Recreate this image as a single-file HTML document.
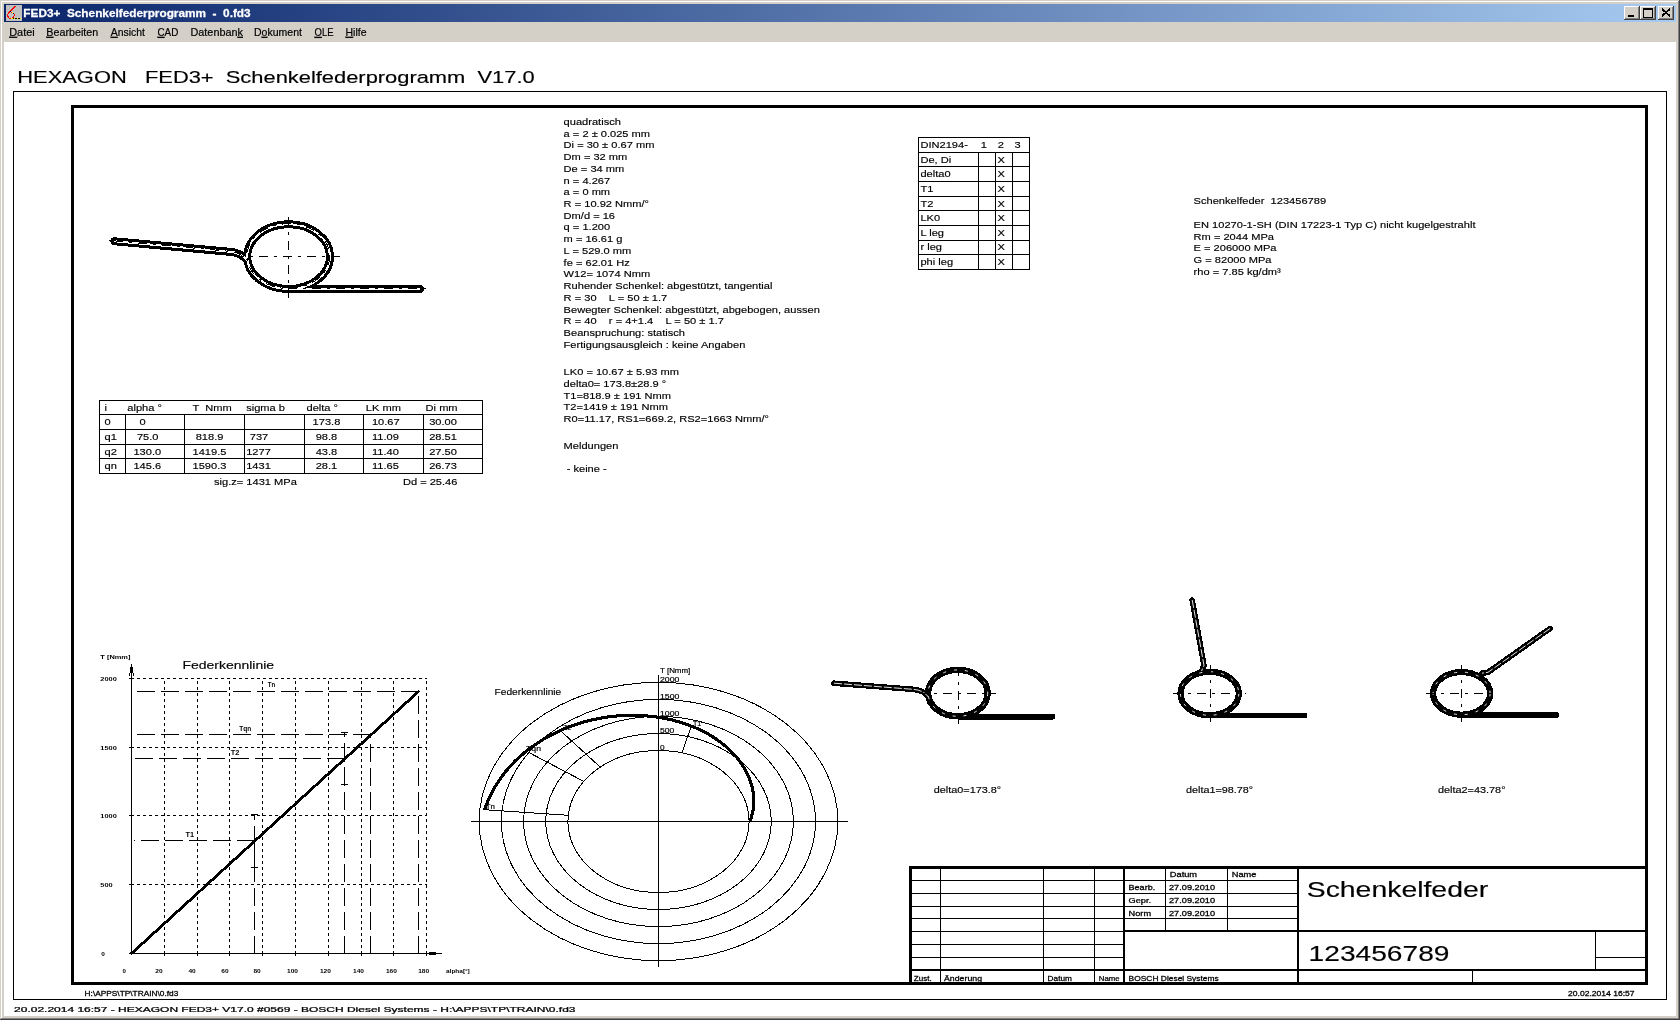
<!DOCTYPE html>
<html><head><meta charset="utf-8"><title>FED3+ Schenkelfederprogramm - 0.fd3</title>
<style>
html,body{margin:0;padding:0;background:#d4d0c8;overflow:hidden}
svg{display:block;will-change:transform}
text{font-family:"Liberation Sans",sans-serif;white-space:pre}
</style></head><body>
<svg width="1680" height="1020" viewBox="0 0 1680 1020" shape-rendering="crispEdges">
<rect x="0" y="0" width="1680" height="1020" fill="#d4d0c8"/>
<rect x="1.00" y="1.00" width="1678.00" height="1.00" fill="#fff" shape-rendering="crispEdges"/>
<rect x="1.00" y="1.00" width="1.00" height="1018.00" fill="#fff" shape-rendering="crispEdges"/>
<rect x="0.00" y="1019.00" width="1680.00" height="1.00" fill="#404040" shape-rendering="crispEdges"/>
<rect x="1679.00" y="0.00" width="1.00" height="1020.00" fill="#404040" shape-rendering="crispEdges"/>
<rect x="1.00" y="1018.00" width="1678.00" height="1.00" fill="#808080" shape-rendering="crispEdges"/>
<rect x="1678.00" y="1.00" width="1.00" height="1018.00" fill="#808080" shape-rendering="crispEdges"/>
<defs><linearGradient id="tg" x1="0" x2="1" y1="0" y2="0"><stop offset="0" stop-color="#0a246a"/><stop offset="1" stop-color="#a6caf0"/></linearGradient></defs>
<rect x="4.00" y="4.00" width="1672.00" height="18.00" fill="url(#tg)" shape-rendering="crispEdges"/>
<rect x="6.00" y="5.00" width="16.00" height="16.00" fill="#c0c0c0" shape-rendering="crispEdges"/>
<path fill="#f00" shape-rendering="crispEdges" d="M14,6h1v1h-1zM15,6h1v1h-1zM13,7h1v1h-1zM14,7h1v1h-1zM12,8h1v1h-1zM13,8h1v1h-1zM11,9h1v1h-1zM12,9h1v1h-1zM10,10h1v1h-1zM11,10h1v1h-1zM9,11h1v1h-1zM8,12h1v1h-1zM9,12h1v1h-1zM11,12h1v1h-1zM8,13h1v1h-1zM7,14h1v1h-1zM14,14h1v1h-1zM7,15h1v1h-1zM14,15h1v1h-1zM7,16h1v1h-1zM8,16h1v1h-1zM13,16h1v1h-1zM8,17h1v1h-1zM12,17h1v1h-1zM13,17h1v1h-1zM9,18h1v1h-1zM10,18h1v1h-1z"/>
<path fill="#000" shape-rendering="crispEdges" d="M10,11h1v1h-1zM13,13h1v1h-1zM13,18h1v1h-1zM15,18h1v1h-1zM16,18h1v1h-1zM18,18h1v1h-1zM19,18h1v1h-1z"/>
<path fill="#ff0" shape-rendering="crispEdges" d="M12,12h1v1h-1zM11,18h1v1h-1zM12,18h1v1h-1zM14,18h1v1h-1zM17,18h1v1h-1zM20,18h1v1h-1z"/>
<text transform="translate(23.30,16.70) scale(1.0740,1)" font-size="11.00" xml:space="preserve" font-weight="bold" fill="#fff" stroke="#fff" stroke-width="0.25">FED3+  Schenkelfederprogramm  -  0.fd3</text>
<rect x="1624.00" y="6.00" width="16.00" height="14.00" fill="#d4d0c8" shape-rendering="crispEdges"/>
<rect x="1624.00" y="6.00" width="15.00" height="1.00" fill="#fff" shape-rendering="crispEdges"/>
<rect x="1624.00" y="6.00" width="1.00" height="13.00" fill="#fff" shape-rendering="crispEdges"/>
<rect x="1624.00" y="19.00" width="16.00" height="1.00" fill="#404040" shape-rendering="crispEdges"/>
<rect x="1639.00" y="6.00" width="1.00" height="14.00" fill="#404040" shape-rendering="crispEdges"/>
<rect x="1625.00" y="18.00" width="14.00" height="1.00" fill="#808080" shape-rendering="crispEdges"/>
<rect x="1638.00" y="7.00" width="1.00" height="12.00" fill="#808080" shape-rendering="crispEdges"/>
<rect x="1640.00" y="6.00" width="16.00" height="14.00" fill="#d4d0c8" shape-rendering="crispEdges"/>
<rect x="1640.00" y="6.00" width="15.00" height="1.00" fill="#fff" shape-rendering="crispEdges"/>
<rect x="1640.00" y="6.00" width="1.00" height="13.00" fill="#fff" shape-rendering="crispEdges"/>
<rect x="1640.00" y="19.00" width="16.00" height="1.00" fill="#404040" shape-rendering="crispEdges"/>
<rect x="1655.00" y="6.00" width="1.00" height="14.00" fill="#404040" shape-rendering="crispEdges"/>
<rect x="1641.00" y="18.00" width="14.00" height="1.00" fill="#808080" shape-rendering="crispEdges"/>
<rect x="1654.00" y="7.00" width="1.00" height="12.00" fill="#808080" shape-rendering="crispEdges"/>
<rect x="1658.00" y="6.00" width="16.00" height="14.00" fill="#d4d0c8" shape-rendering="crispEdges"/>
<rect x="1658.00" y="6.00" width="15.00" height="1.00" fill="#fff" shape-rendering="crispEdges"/>
<rect x="1658.00" y="6.00" width="1.00" height="13.00" fill="#fff" shape-rendering="crispEdges"/>
<rect x="1658.00" y="19.00" width="16.00" height="1.00" fill="#404040" shape-rendering="crispEdges"/>
<rect x="1673.00" y="6.00" width="1.00" height="14.00" fill="#404040" shape-rendering="crispEdges"/>
<rect x="1659.00" y="18.00" width="14.00" height="1.00" fill="#808080" shape-rendering="crispEdges"/>
<rect x="1672.00" y="7.00" width="1.00" height="12.00" fill="#808080" shape-rendering="crispEdges"/>
<rect x="1628.00" y="15.00" width="6.00" height="2.00" fill="#000" shape-rendering="crispEdges"/>
<rect x="1643.00" y="8.00" width="9.00" height="9.00" fill="none" stroke="#000" stroke-width="1.00" shape-rendering="crispEdges"/>
<rect x="1643.00" y="8.00" width="9.00" height="2.00" fill="#000" shape-rendering="crispEdges"/>
<path d="M1662,9 L1670,16 M1670,9 L1662,16" stroke="#000" stroke-width="1.8" fill="none"/>
<text transform="translate(9.20,35.8) scale(0.9930,1)" font-size="11" stroke="#000" stroke-width="0.2"><tspan text-decoration="underline">D</tspan>atei</text>
<text transform="translate(46.30,35.8) scale(0.9773,1)" font-size="11" stroke="#000" stroke-width="0.2"><tspan text-decoration="underline">B</tspan>earbeiten</text>
<text transform="translate(110.80,35.8) scale(0.9481,1)" font-size="11" stroke="#000" stroke-width="0.2"><tspan text-decoration="underline">A</tspan>nsicht</text>
<text transform="translate(157.50,35.8) scale(0.8956,1)" font-size="11" stroke="#000" stroke-width="0.2"><tspan text-decoration="underline">C</tspan>AD</text>
<text transform="translate(190.50,35.8) scale(0.9867,1)" font-size="11" stroke="#000" stroke-width="0.2">Datenban<tspan text-decoration="underline">k</tspan></text>
<text transform="translate(254.00,35.8) scale(0.9574,1)" font-size="11" stroke="#000" stroke-width="0.2">D<tspan text-decoration="underline">o</tspan>kument</text>
<text transform="translate(314.50,35.8) scale(0.8632,1)" font-size="11" stroke="#000" stroke-width="0.2"><tspan text-decoration="underline">O</tspan>LE</text>
<text transform="translate(345.50,35.8) scale(0.9543,1)" font-size="11" stroke="#000" stroke-width="0.2"><tspan text-decoration="underline">H</tspan>ilfe</text>
<rect x="4.00" y="42.00" width="1672.00" height="974.00" fill="#fff" shape-rendering="crispEdges"/>
<text transform="translate(17.30,82.70) scale(1.3689,1)" font-size="16.00" xml:space="preserve" stroke="#000" stroke-width="0.15">HEXAGON   FED3+  Schenkelfederprogramm  V17.0</text>
<rect x="13.50" y="91.50" width="1653.00" height="908.00" fill="none" stroke="#000" stroke-width="1.00" shape-rendering="crispEdges"/>
<rect x="72.50" y="106.50" width="1574.00" height="877.00" fill="none" stroke="#000" stroke-width="3.00" shape-rendering="crispEdges"/>
<text transform="translate(84.60,995.90) scale(1.2584,1)" font-size="6.60" xml:space="preserve" stroke="#000" stroke-width="0.25">H:\APPS\TP\TRAIN\0.fd3</text>
<text transform="translate(1568.10,995.50) scale(1.2981,1)" font-size="6.60" xml:space="preserve" stroke="#000" stroke-width="0.25">20.02.2014 16:57</text>
<text transform="translate(14.10,1011.90) scale(1.7154,1)" font-size="7.00" xml:space="preserve" stroke="#000" stroke-width="0.25">20.02.2014 16:57 - HEXAGON FED3+ V17.0 #0569 - BOSCH Diesel Systems - H:\APPS\TP\TRAIN\0.fd3</text>
<text transform="translate(563.60,124.90) scale(1.1560,1)" font-size="9.60" xml:space="preserve" stroke="#000" stroke-width="0.15">quadratisch</text>
<text transform="translate(563.60,136.63) scale(1.1560,1)" font-size="9.60" xml:space="preserve" stroke="#000" stroke-width="0.15">a = 2 ± 0.025 mm</text>
<text transform="translate(563.60,148.36) scale(1.1560,1)" font-size="9.60" xml:space="preserve" stroke="#000" stroke-width="0.15">Di = 30 ± 0.67 mm</text>
<text transform="translate(563.60,160.09) scale(1.1560,1)" font-size="9.60" xml:space="preserve" stroke="#000" stroke-width="0.15">Dm = 32 mm</text>
<text transform="translate(563.60,171.82) scale(1.1560,1)" font-size="9.60" xml:space="preserve" stroke="#000" stroke-width="0.15">De = 34 mm</text>
<text transform="translate(563.60,183.55) scale(1.1560,1)" font-size="9.60" xml:space="preserve" stroke="#000" stroke-width="0.15">n = 4.267</text>
<text transform="translate(563.60,195.28) scale(1.1560,1)" font-size="9.60" xml:space="preserve" stroke="#000" stroke-width="0.15">a = 0 mm</text>
<text transform="translate(563.60,207.01) scale(1.1560,1)" font-size="9.60" xml:space="preserve" stroke="#000" stroke-width="0.15">R = 10.92 Nmm/°</text>
<text transform="translate(563.60,218.74) scale(1.1560,1)" font-size="9.60" xml:space="preserve" stroke="#000" stroke-width="0.15">Dm/d = 16</text>
<text transform="translate(563.60,230.47) scale(1.1560,1)" font-size="9.60" xml:space="preserve" stroke="#000" stroke-width="0.15">q = 1.200</text>
<text transform="translate(563.60,242.20) scale(1.1560,1)" font-size="9.60" xml:space="preserve" stroke="#000" stroke-width="0.15">m = 16.61 g</text>
<text transform="translate(563.60,253.93) scale(1.1560,1)" font-size="9.60" xml:space="preserve" stroke="#000" stroke-width="0.15">L = 529.0 mm</text>
<text transform="translate(563.60,265.66) scale(1.1560,1)" font-size="9.60" xml:space="preserve" stroke="#000" stroke-width="0.15">fe = 62.01 Hz</text>
<text transform="translate(563.60,277.39) scale(1.1560,1)" font-size="9.60" xml:space="preserve" stroke="#000" stroke-width="0.15">W12= 1074 Nmm</text>
<text transform="translate(563.60,289.12) scale(1.1560,1)" font-size="9.60" xml:space="preserve" stroke="#000" stroke-width="0.15">Ruhender Schenkel: abgestützt, tangential</text>
<text transform="translate(563.60,300.85) scale(1.1560,1)" font-size="9.60" xml:space="preserve" stroke="#000" stroke-width="0.15">R = 30    L = 50 ± 1.7</text>
<text transform="translate(563.60,312.58) scale(1.1560,1)" font-size="9.60" xml:space="preserve" stroke="#000" stroke-width="0.15">Bewegter Schenkel: abgestützt, abgebogen, aussen</text>
<text transform="translate(563.60,324.31) scale(1.1560,1)" font-size="9.60" xml:space="preserve" stroke="#000" stroke-width="0.15">R = 40    r = 4+1.4    L = 50 ± 1.7</text>
<text transform="translate(563.60,336.04) scale(1.1560,1)" font-size="9.60" xml:space="preserve" stroke="#000" stroke-width="0.15">Beanspruchung: statisch</text>
<text transform="translate(563.60,347.77) scale(1.1560,1)" font-size="9.60" xml:space="preserve" stroke="#000" stroke-width="0.15">Fertigungsausgleich : keine Angaben</text>
<text transform="translate(563.60,375.10) scale(1.1560,1)" font-size="9.60" xml:space="preserve" stroke="#000" stroke-width="0.15">LK0 = 10.67 ± 5.93 mm</text>
<text transform="translate(563.60,386.90) scale(1.1560,1)" font-size="9.60" xml:space="preserve" stroke="#000" stroke-width="0.15">delta0= 173.8±28.9 °</text>
<text transform="translate(563.60,398.60) scale(1.1560,1)" font-size="9.60" xml:space="preserve" stroke="#000" stroke-width="0.15">T1=818.9 ± 191 Nmm</text>
<text transform="translate(563.60,410.40) scale(1.1560,1)" font-size="9.60" xml:space="preserve" stroke="#000" stroke-width="0.15">T2=1419 ± 191 Nmm</text>
<text transform="translate(563.60,422.10) scale(1.1560,1)" font-size="9.60" xml:space="preserve" stroke="#000" stroke-width="0.15">R0=11.17, RS1=669.2, RS2=1663 Nmm/°</text>
<text transform="translate(563.60,448.60) scale(1.1560,1)" font-size="9.60" xml:space="preserve" stroke="#000" stroke-width="0.15">Meldungen</text>
<text transform="translate(563.60,471.70) scale(1.1560,1)" font-size="9.60" xml:space="preserve" stroke="#000" stroke-width="0.15"> - keine -</text>
<text transform="translate(1193.60,203.60) scale(1.1560,1)" font-size="9.60" xml:space="preserve" stroke="#000" stroke-width="0.15">Schenkelfeder  123456789</text>
<text transform="translate(1193.60,227.60) scale(1.1560,1)" font-size="9.60" xml:space="preserve" stroke="#000" stroke-width="0.15">EN 10270-1-SH (DIN 17223-1 Typ C) nicht kugelgestrahlt</text>
<text transform="translate(1193.60,239.60) scale(1.1560,1)" font-size="9.60" xml:space="preserve" stroke="#000" stroke-width="0.15">Rm = 2044 MPa</text>
<text transform="translate(1193.60,250.90) scale(1.1560,1)" font-size="9.60" xml:space="preserve" stroke="#000" stroke-width="0.15">E = 206000 MPa</text>
<text transform="translate(1193.60,262.60) scale(1.1560,1)" font-size="9.60" xml:space="preserve" stroke="#000" stroke-width="0.15">G = 82000 MPa</text>
<text transform="translate(1193.60,274.70) scale(1.1560,1)" font-size="9.60" xml:space="preserve" stroke="#000" stroke-width="0.15">rho = 7.85 kg/dm³</text>
<rect x="918.50" y="137.50" width="111.00" height="132.00" fill="none" stroke="#000" stroke-width="1.00" shape-rendering="crispEdges"/>
<line x1="918.50" y1="152.50" x2="1029.50" y2="152.50" stroke="#000" stroke-width="1.00" shape-rendering="crispEdges"/>
<line x1="918.50" y1="166.50" x2="1029.50" y2="166.50" stroke="#000" stroke-width="1.00" shape-rendering="crispEdges"/>
<line x1="918.50" y1="181.50" x2="1029.50" y2="181.50" stroke="#000" stroke-width="1.00" shape-rendering="crispEdges"/>
<line x1="918.50" y1="196.50" x2="1029.50" y2="196.50" stroke="#000" stroke-width="1.00" shape-rendering="crispEdges"/>
<line x1="918.50" y1="210.50" x2="1029.50" y2="210.50" stroke="#000" stroke-width="1.00" shape-rendering="crispEdges"/>
<line x1="918.50" y1="225.50" x2="1029.50" y2="225.50" stroke="#000" stroke-width="1.00" shape-rendering="crispEdges"/>
<line x1="918.50" y1="240.50" x2="1029.50" y2="240.50" stroke="#000" stroke-width="1.00" shape-rendering="crispEdges"/>
<line x1="918.50" y1="254.50" x2="1029.50" y2="254.50" stroke="#000" stroke-width="1.00" shape-rendering="crispEdges"/>
<line x1="978.50" y1="152.50" x2="978.50" y2="269.50" stroke="#000" stroke-width="1.00" shape-rendering="crispEdges"/>
<line x1="995.50" y1="152.50" x2="995.50" y2="269.50" stroke="#000" stroke-width="1.00" shape-rendering="crispEdges"/>
<line x1="1012.50" y1="152.50" x2="1012.50" y2="269.50" stroke="#000" stroke-width="1.00" shape-rendering="crispEdges"/>
<text transform="translate(920.40,147.80) scale(1.1560,1)" font-size="9.60" xml:space="preserve" stroke="#000" stroke-width="0.15">DIN2194-</text>
<text transform="translate(980.80,147.80) scale(1.1560,1)" font-size="9.60" xml:space="preserve" stroke="#000" stroke-width="0.15">1</text>
<text transform="translate(997.80,147.80) scale(1.1560,1)" font-size="9.60" xml:space="preserve" stroke="#000" stroke-width="0.15">2</text>
<text transform="translate(1014.60,147.80) scale(1.1560,1)" font-size="9.60" xml:space="preserve" stroke="#000" stroke-width="0.15">3</text>
<text transform="translate(920.40,162.60) scale(1.1560,1)" font-size="9.60" xml:space="preserve" stroke="#000" stroke-width="0.15">De, Di</text>
<text transform="translate(997.50,162.60) scale(1.1560,1)" font-size="9.60" xml:space="preserve" stroke="#000" stroke-width="0.15">X</text>
<text transform="translate(920.40,176.90) scale(1.1560,1)" font-size="9.60" xml:space="preserve" stroke="#000" stroke-width="0.15">delta0</text>
<text transform="translate(997.50,176.90) scale(1.1560,1)" font-size="9.60" xml:space="preserve" stroke="#000" stroke-width="0.15">X</text>
<text transform="translate(920.40,191.70) scale(1.1560,1)" font-size="9.60" xml:space="preserve" stroke="#000" stroke-width="0.15">T1</text>
<text transform="translate(997.50,191.70) scale(1.1560,1)" font-size="9.60" xml:space="preserve" stroke="#000" stroke-width="0.15">X</text>
<text transform="translate(920.40,206.50) scale(1.1560,1)" font-size="9.60" xml:space="preserve" stroke="#000" stroke-width="0.15">T2</text>
<text transform="translate(997.50,206.50) scale(1.1560,1)" font-size="9.60" xml:space="preserve" stroke="#000" stroke-width="0.15">X</text>
<text transform="translate(920.40,220.80) scale(1.1560,1)" font-size="9.60" xml:space="preserve" stroke="#000" stroke-width="0.15">LK0</text>
<text transform="translate(997.50,220.80) scale(1.1560,1)" font-size="9.60" xml:space="preserve" stroke="#000" stroke-width="0.15">X</text>
<text transform="translate(920.40,235.60) scale(1.1560,1)" font-size="9.60" xml:space="preserve" stroke="#000" stroke-width="0.15">L leg</text>
<text transform="translate(997.50,235.60) scale(1.1560,1)" font-size="9.60" xml:space="preserve" stroke="#000" stroke-width="0.15">X</text>
<text transform="translate(920.40,250.40) scale(1.1560,1)" font-size="9.60" xml:space="preserve" stroke="#000" stroke-width="0.15">r leg</text>
<text transform="translate(997.50,250.40) scale(1.1560,1)" font-size="9.60" xml:space="preserve" stroke="#000" stroke-width="0.15">X</text>
<text transform="translate(920.40,264.70) scale(1.1560,1)" font-size="9.60" xml:space="preserve" stroke="#000" stroke-width="0.15">phi leg</text>
<text transform="translate(997.50,264.70) scale(1.1560,1)" font-size="9.60" xml:space="preserve" stroke="#000" stroke-width="0.15">X</text>
<rect x="99.50" y="400.50" width="383.00" height="73.00" fill="none" stroke="#000" stroke-width="1.00" shape-rendering="crispEdges"/>
<line x1="99.50" y1="414.50" x2="482.50" y2="414.50" stroke="#000" stroke-width="1.00" shape-rendering="crispEdges"/>
<line x1="99.50" y1="429.50" x2="482.50" y2="429.50" stroke="#000" stroke-width="1.00" shape-rendering="crispEdges"/>
<line x1="99.50" y1="444.50" x2="482.50" y2="444.50" stroke="#000" stroke-width="1.00" shape-rendering="crispEdges"/>
<line x1="99.50" y1="458.50" x2="482.50" y2="458.50" stroke="#000" stroke-width="1.00" shape-rendering="crispEdges"/>
<line x1="125.50" y1="414.50" x2="125.50" y2="473.50" stroke="#000" stroke-width="1.00" shape-rendering="crispEdges"/>
<line x1="184.50" y1="414.50" x2="184.50" y2="473.50" stroke="#000" stroke-width="1.00" shape-rendering="crispEdges"/>
<line x1="244.50" y1="414.50" x2="244.50" y2="473.50" stroke="#000" stroke-width="1.00" shape-rendering="crispEdges"/>
<line x1="304.50" y1="414.50" x2="304.50" y2="473.50" stroke="#000" stroke-width="1.00" shape-rendering="crispEdges"/>
<line x1="363.50" y1="414.50" x2="363.50" y2="473.50" stroke="#000" stroke-width="1.00" shape-rendering="crispEdges"/>
<line x1="423.50" y1="414.50" x2="423.50" y2="473.50" stroke="#000" stroke-width="1.00" shape-rendering="crispEdges"/>
<text transform="translate(104.60,410.70) scale(1.1560,1)" font-size="9.60" xml:space="preserve" stroke="#000" stroke-width="0.15">i</text>
<text transform="translate(127.30,410.70) scale(1.1560,1)" font-size="9.60" xml:space="preserve" stroke="#000" stroke-width="0.15">alpha °</text>
<text transform="translate(192.50,410.70) scale(1.1560,1)" font-size="9.60" xml:space="preserve" stroke="#000" stroke-width="0.15">T  Nmm</text>
<text transform="translate(246.20,410.70) scale(1.1560,1)" font-size="9.60" xml:space="preserve" stroke="#000" stroke-width="0.15">sigma b</text>
<text transform="translate(306.50,410.70) scale(1.1560,1)" font-size="9.60" xml:space="preserve" stroke="#000" stroke-width="0.15">delta °</text>
<text transform="translate(365.80,410.70) scale(1.1560,1)" font-size="9.60" xml:space="preserve" stroke="#000" stroke-width="0.15">LK mm</text>
<text transform="translate(425.60,410.70) scale(1.1560,1)" font-size="9.60" xml:space="preserve" stroke="#000" stroke-width="0.15">Di mm</text>
<text transform="translate(104.60,425.40) scale(1.1560,1)" font-size="9.60" xml:space="preserve" stroke="#000" stroke-width="0.15">0</text>
<text transform="translate(139.50,425.40) scale(1.1560,1)" font-size="9.60" xml:space="preserve" stroke="#000" stroke-width="0.15">0</text>
<text transform="translate(312.60,425.40) scale(1.1560,1)" font-size="9.60" xml:space="preserve" stroke="#000" stroke-width="0.15">173.8</text>
<text transform="translate(371.90,425.40) scale(1.1560,1)" font-size="9.60" xml:space="preserve" stroke="#000" stroke-width="0.15">10.67</text>
<text transform="translate(429.20,425.40) scale(1.1560,1)" font-size="9.60" xml:space="preserve" stroke="#000" stroke-width="0.15">30.00</text>
<text transform="translate(104.60,439.70) scale(1.1560,1)" font-size="9.60" xml:space="preserve" stroke="#000" stroke-width="0.15">q1</text>
<text transform="translate(136.90,439.70) scale(1.1560,1)" font-size="9.60" xml:space="preserve" stroke="#000" stroke-width="0.15">75.0</text>
<text transform="translate(195.70,439.70) scale(1.1560,1)" font-size="9.60" xml:space="preserve" stroke="#000" stroke-width="0.15">818.9</text>
<text transform="translate(249.80,439.70) scale(1.1560,1)" font-size="9.60" xml:space="preserve" stroke="#000" stroke-width="0.15">737</text>
<text transform="translate(315.70,439.70) scale(1.1560,1)" font-size="9.60" xml:space="preserve" stroke="#000" stroke-width="0.15">98.8</text>
<text transform="translate(371.90,439.70) scale(1.1560,1)" font-size="9.60" xml:space="preserve" stroke="#000" stroke-width="0.15">11.09</text>
<text transform="translate(429.20,439.70) scale(1.1560,1)" font-size="9.60" xml:space="preserve" stroke="#000" stroke-width="0.15">28.51</text>
<text transform="translate(104.60,454.50) scale(1.1560,1)" font-size="9.60" xml:space="preserve" stroke="#000" stroke-width="0.15">q2</text>
<text transform="translate(133.40,454.50) scale(1.1560,1)" font-size="9.60" xml:space="preserve" stroke="#000" stroke-width="0.15">130.0</text>
<text transform="translate(192.50,454.50) scale(1.1560,1)" font-size="9.60" xml:space="preserve" stroke="#000" stroke-width="0.15">1419.5</text>
<text transform="translate(246.20,454.50) scale(1.1560,1)" font-size="9.60" xml:space="preserve" stroke="#000" stroke-width="0.15">1277</text>
<text transform="translate(315.70,454.50) scale(1.1560,1)" font-size="9.60" xml:space="preserve" stroke="#000" stroke-width="0.15">43.8</text>
<text transform="translate(371.90,454.50) scale(1.1560,1)" font-size="9.60" xml:space="preserve" stroke="#000" stroke-width="0.15">11.40</text>
<text transform="translate(429.20,454.50) scale(1.1560,1)" font-size="9.60" xml:space="preserve" stroke="#000" stroke-width="0.15">27.50</text>
<text transform="translate(104.60,469.30) scale(1.1560,1)" font-size="9.60" xml:space="preserve" stroke="#000" stroke-width="0.15">qn</text>
<text transform="translate(133.40,469.30) scale(1.1560,1)" font-size="9.60" xml:space="preserve" stroke="#000" stroke-width="0.15">145.6</text>
<text transform="translate(192.50,469.30) scale(1.1560,1)" font-size="9.60" xml:space="preserve" stroke="#000" stroke-width="0.15">1590.3</text>
<text transform="translate(246.20,469.30) scale(1.1560,1)" font-size="9.60" xml:space="preserve" stroke="#000" stroke-width="0.15">1431</text>
<text transform="translate(315.70,469.30) scale(1.1560,1)" font-size="9.60" xml:space="preserve" stroke="#000" stroke-width="0.15">28.1</text>
<text transform="translate(371.90,469.30) scale(1.1560,1)" font-size="9.60" xml:space="preserve" stroke="#000" stroke-width="0.15">11.65</text>
<text transform="translate(429.20,469.30) scale(1.1560,1)" font-size="9.60" xml:space="preserve" stroke="#000" stroke-width="0.15">26.73</text>
<text transform="translate(214.00,484.70) scale(1.1560,1)" font-size="9.60" xml:space="preserve" stroke="#000" stroke-width="0.15">sig.z= 1431 MPa</text>
<text transform="translate(402.90,484.70) scale(1.1560,1)" font-size="9.60" xml:space="preserve" stroke="#000" stroke-width="0.15">Dd = 25.46</text>
<line x1="131.50" y1="953.50" x2="131.50" y2="664.00" stroke="#000" stroke-width="1.00" shape-rendering="crispEdges"/>
<line x1="129.00" y1="953.50" x2="442.00" y2="953.50" stroke="#000" stroke-width="1.00" shape-rendering="crispEdges"/>
<path d="M131.0,664 v3 h-1 v6 h3 v-6 h-1 v-3 z" fill="#000"/>
<line x1="129.50" y1="673.00" x2="129.50" y2="676.00" stroke="#000" stroke-width="1.00" shape-rendering="crispEdges"/>
<line x1="133.50" y1="673.00" x2="133.50" y2="676.00" stroke="#000" stroke-width="1.00" shape-rendering="crispEdges"/>
<path d="M436,952.0 h-7 v3 h7 z" fill="#000"/>
<line x1="164.50" y1="956.00" x2="164.50" y2="954.00" stroke="#000" stroke-width="1.00" shape-rendering="crispEdges"/>
<line x1="164.50" y1="954.00" x2="164.50" y2="678.00" stroke="#000" stroke-width="1.00" stroke-dasharray="3 3" shape-rendering="crispEdges"/>
<line x1="197.50" y1="956.00" x2="197.50" y2="954.00" stroke="#000" stroke-width="1.00" shape-rendering="crispEdges"/>
<line x1="197.50" y1="954.00" x2="197.50" y2="678.00" stroke="#000" stroke-width="1.00" stroke-dasharray="3 3" shape-rendering="crispEdges"/>
<line x1="229.50" y1="956.00" x2="229.50" y2="954.00" stroke="#000" stroke-width="1.00" shape-rendering="crispEdges"/>
<line x1="229.50" y1="954.00" x2="229.50" y2="678.00" stroke="#000" stroke-width="1.00" stroke-dasharray="3 3" shape-rendering="crispEdges"/>
<line x1="262.50" y1="956.00" x2="262.50" y2="954.00" stroke="#000" stroke-width="1.00" shape-rendering="crispEdges"/>
<line x1="262.50" y1="954.00" x2="262.50" y2="678.00" stroke="#000" stroke-width="1.00" stroke-dasharray="3 3" shape-rendering="crispEdges"/>
<line x1="295.50" y1="956.00" x2="295.50" y2="954.00" stroke="#000" stroke-width="1.00" shape-rendering="crispEdges"/>
<line x1="295.50" y1="954.00" x2="295.50" y2="678.00" stroke="#000" stroke-width="1.00" stroke-dasharray="3 3" shape-rendering="crispEdges"/>
<line x1="328.50" y1="956.00" x2="328.50" y2="954.00" stroke="#000" stroke-width="1.00" shape-rendering="crispEdges"/>
<line x1="328.50" y1="954.00" x2="328.50" y2="678.00" stroke="#000" stroke-width="1.00" stroke-dasharray="3 3" shape-rendering="crispEdges"/>
<line x1="361.50" y1="956.00" x2="361.50" y2="954.00" stroke="#000" stroke-width="1.00" shape-rendering="crispEdges"/>
<line x1="361.50" y1="954.00" x2="361.50" y2="678.00" stroke="#000" stroke-width="1.00" stroke-dasharray="3 3" shape-rendering="crispEdges"/>
<line x1="393.50" y1="956.00" x2="393.50" y2="954.00" stroke="#000" stroke-width="1.00" shape-rendering="crispEdges"/>
<line x1="393.50" y1="954.00" x2="393.50" y2="678.00" stroke="#000" stroke-width="1.00" stroke-dasharray="3 3" shape-rendering="crispEdges"/>
<line x1="426.50" y1="956.00" x2="426.50" y2="954.00" stroke="#000" stroke-width="1.00" shape-rendering="crispEdges"/>
<line x1="426.50" y1="954.00" x2="426.50" y2="678.00" stroke="#000" stroke-width="1.00" stroke-dasharray="3 3" shape-rendering="crispEdges"/>
<line x1="129.00" y1="884.50" x2="134.00" y2="884.50" stroke="#000" stroke-width="1.00" shape-rendering="crispEdges"/>
<line x1="137.00" y1="884.50" x2="427.00" y2="884.50" stroke="#000" stroke-width="1.00" stroke-dasharray="3 3" shape-rendering="crispEdges"/>
<line x1="129.00" y1="815.50" x2="134.00" y2="815.50" stroke="#000" stroke-width="1.00" shape-rendering="crispEdges"/>
<line x1="137.00" y1="815.50" x2="427.00" y2="815.50" stroke="#000" stroke-width="1.00" stroke-dasharray="3 3" shape-rendering="crispEdges"/>
<line x1="129.00" y1="747.50" x2="134.00" y2="747.50" stroke="#000" stroke-width="1.00" shape-rendering="crispEdges"/>
<line x1="137.00" y1="747.50" x2="427.00" y2="747.50" stroke="#000" stroke-width="1.00" stroke-dasharray="3 3" shape-rendering="crispEdges"/>
<line x1="129.00" y1="678.50" x2="134.00" y2="678.50" stroke="#000" stroke-width="1.00" shape-rendering="crispEdges"/>
<line x1="137.00" y1="678.50" x2="427.00" y2="678.50" stroke="#000" stroke-width="1.00" stroke-dasharray="3 3" shape-rendering="crispEdges"/>
<line x1="131.50" y1="953.50" x2="418.50" y2="691.50" stroke="#000" stroke-width="2.8" stroke-linecap="square"/>
<line x1="255.00" y1="840.50" x2="133.50" y2="840.50" stroke="#000" stroke-width="1.00" stroke-dasharray="18 6" shape-rendering="crispEdges"/>
<line x1="254.50" y1="954.00" x2="254.50" y2="840.00" stroke="#000" stroke-width="1.00" stroke-dasharray="18 6" shape-rendering="crispEdges"/>
<line x1="345.00" y1="758.50" x2="133.50" y2="758.50" stroke="#000" stroke-width="1.00" stroke-dasharray="18 6" shape-rendering="crispEdges"/>
<line x1="344.50" y1="954.00" x2="344.50" y2="758.00" stroke="#000" stroke-width="1.00" stroke-dasharray="18 6" shape-rendering="crispEdges"/>
<line x1="371.00" y1="734.50" x2="133.50" y2="734.50" stroke="#000" stroke-width="1.00" stroke-dasharray="18 6" shape-rendering="crispEdges"/>
<line x1="370.50" y1="954.00" x2="370.50" y2="734.00" stroke="#000" stroke-width="1.00" stroke-dasharray="18 6" shape-rendering="crispEdges"/>
<line x1="419.00" y1="691.50" x2="133.50" y2="691.50" stroke="#000" stroke-width="1.00" stroke-dasharray="18 6" shape-rendering="crispEdges"/>
<line x1="418.50" y1="954.00" x2="418.50" y2="691.00" stroke="#000" stroke-width="1.00" stroke-dasharray="18 6" shape-rendering="crispEdges"/>
<line x1="254.50" y1="868.00" x2="254.50" y2="814.00" stroke="#000" stroke-width="1.00" stroke-dasharray="18 6" shape-rendering="crispEdges"/>
<line x1="251.00" y1="814.50" x2="258.00" y2="814.50" stroke="#000" stroke-width="1.00" shape-rendering="crispEdges"/>
<line x1="251.00" y1="867.50" x2="258.00" y2="867.50" stroke="#000" stroke-width="1.00" shape-rendering="crispEdges"/>
<line x1="344.50" y1="785.00" x2="344.50" y2="732.00" stroke="#000" stroke-width="1.00" stroke-dasharray="18 6" shape-rendering="crispEdges"/>
<line x1="341.00" y1="732.50" x2="348.00" y2="732.50" stroke="#000" stroke-width="1.00" shape-rendering="crispEdges"/>
<line x1="341.00" y1="784.50" x2="348.00" y2="784.50" stroke="#000" stroke-width="1.00" shape-rendering="crispEdges"/>
<text transform="translate(100.30,658.90) scale(1.2012,1)" font-size="6.20" xml:space="preserve" font-weight="bold">T [Nmm]</text>
<text transform="translate(182.60,669.20) scale(1.2694,1)" font-size="11.00" xml:space="preserve" stroke="#000" stroke-width="0.15">Federkennlinie</text>
<text transform="translate(100.30,680.50) scale(1.1963,1)" font-size="6.20" xml:space="preserve" font-weight="bold">2000</text>
<text transform="translate(100.30,749.50) scale(1.1963,1)" font-size="6.20" xml:space="preserve" font-weight="bold">1500</text>
<text transform="translate(100.30,817.50) scale(1.1963,1)" font-size="6.20" xml:space="preserve" font-weight="bold">1000</text>
<text transform="translate(100.30,886.50) scale(1.1987,1)" font-size="6.20" xml:space="preserve" font-weight="bold">500</text>
<text transform="translate(101.20,955.50) scale(1.0440,1)" font-size="6.20" xml:space="preserve" font-weight="bold">0</text>
<text transform="translate(122.50,972.60) scale(0.9860,1)" font-size="6.20" xml:space="preserve" font-weight="bold">0</text>
<text transform="translate(155.35,972.60) scale(1.0585,1)" font-size="6.20" xml:space="preserve" font-weight="bold">20</text>
<text transform="translate(188.45,972.60) scale(1.0585,1)" font-size="6.20" xml:space="preserve" font-weight="bold">40</text>
<text transform="translate(221.35,972.60) scale(1.0585,1)" font-size="6.20" xml:space="preserve" font-weight="bold">60</text>
<text transform="translate(253.45,972.60) scale(1.0585,1)" font-size="6.20" xml:space="preserve" font-weight="bold">80</text>
<text transform="translate(287.00,972.60) scale(1.0633,1)" font-size="6.20" xml:space="preserve" font-weight="bold">100</text>
<text transform="translate(319.90,972.60) scale(1.0633,1)" font-size="6.20" xml:space="preserve" font-weight="bold">120</text>
<text transform="translate(353.00,972.60) scale(1.0633,1)" font-size="6.20" xml:space="preserve" font-weight="bold">140</text>
<text transform="translate(385.90,972.60) scale(1.0633,1)" font-size="6.20" xml:space="preserve" font-weight="bold">160</text>
<text transform="translate(418.20,972.60) scale(1.0633,1)" font-size="6.20" xml:space="preserve" font-weight="bold">180</text>
<text transform="translate(446.00,972.60) scale(1.0437,1)" font-size="6.20" xml:space="preserve" font-weight="bold">alpha[°]</text>
<text transform="translate(185.40,837.30) scale(1.0837,1)" font-size="6.80" xml:space="preserve" font-weight="bold">T1</text>
<text transform="translate(230.70,755.00) scale(1.0837,1)" font-size="6.80" xml:space="preserve" font-weight="bold">T2</text>
<text transform="translate(239.20,731.00) scale(0.9630,1)" font-size="6.80" xml:space="preserve" font-weight="bold">Tqn</text>
<text transform="translate(267.70,687.30) scale(0.9028,1)" font-size="6.80" xml:space="preserve" font-weight="bold">Tn</text>
<ellipse cx="658.5" cy="821.5" rx="90.6" ry="71.0" fill="none" stroke="#000" stroke-width="1"/>
<ellipse cx="658.5" cy="821.5" rx="112.8" ry="88.0" fill="none" stroke="#000" stroke-width="1"/>
<ellipse cx="658.5" cy="821.5" rx="134.9" ry="105.1" fill="none" stroke="#000" stroke-width="1"/>
<ellipse cx="658.5" cy="821.5" rx="157.1" ry="122.1" fill="none" stroke="#000" stroke-width="1"/>
<ellipse cx="658.5" cy="821.5" rx="179.3" ry="139.2" fill="none" stroke="#000" stroke-width="1"/>
<line x1="471.30" y1="821.50" x2="848.30" y2="821.50" stroke="#000" stroke-width="1.00" shape-rendering="crispEdges"/>
<line x1="658.50" y1="675.00" x2="658.50" y2="967.30" stroke="#000" stroke-width="1.00" shape-rendering="crispEdges"/>
<polyline transform="translate(0.7,0.4)" points="749.1,821.5 749.3,820.9 749.6,820.3 749.8,819.6 750.0,819.0 750.2,818.4 750.4,817.7 750.6,817.1 750.8,816.4 751.0,815.8 751.2,815.1 751.3,814.5 751.5,813.8 751.6,813.2 751.8,812.5 751.9,811.9 752.1,811.2 752.2,810.5 752.3,809.9 752.4,809.2 752.5,808.5 752.6,807.8 752.7,807.2 752.7,806.5 752.8,805.8 752.9,805.1 752.9,804.4 753.0,803.8 753.0,803.1 753.0,802.4 753.0,801.7 753.0,801.0 753.0,800.3 753.0,799.6 753.0,798.9 753.0,798.2 753.0,797.5 752.9,796.8 752.9,796.1 752.8,795.4 752.7,794.7 752.7,794.0 752.6,793.3 752.5,792.5 752.4,791.8 752.3,791.1 752.1,790.4 752.0,789.7 751.9,789.0 751.7,788.3 751.6,787.6 751.4,786.8 751.2,786.1 751.1,785.4 750.9,784.7 750.7,784.0 750.5,783.3 750.2,782.6 750.0,781.8 749.8,781.1 749.5,780.4 749.3,779.7 749.0,779.0 748.7,778.3 748.5,777.6 748.2,776.9 747.9,776.1 747.6,775.4 747.3,774.7 746.9,774.0 746.6,773.3 746.2,772.6 745.9,771.9 745.5,771.2 745.2,770.5 744.8,769.8 744.4,769.1 744.0,768.4 743.6,767.7 743.2,767.0 742.7,766.3 742.3,765.6 741.9,764.9 741.4,764.2 740.9,763.5 740.5,762.8 740.0,762.2 739.5,761.5 739.0,760.8 738.5,760.1 738.0,759.5 737.4,758.8 736.9,758.1 736.4,757.4 735.8,756.8 735.2,756.1 734.7,755.5 734.1,754.8 733.5,754.2 732.9,753.5 732.3,752.9 731.7,752.2 731.1,751.6 730.4,750.9 729.8,750.3 729.1,749.7 728.5,749.0 727.8,748.4 727.1,747.8 726.4,747.2 725.7,746.6 725.0,746.0 724.3,745.4 723.6,744.8 722.9,744.2 722.1,743.6 721.4,743.0 720.6,742.4 719.9,741.8 719.1,741.2 718.3,740.7 717.5,740.1 716.7,739.5 715.9,739.0 715.1,738.4 714.3,737.9 713.5,737.3 712.6,736.8 711.8,736.3 710.9,735.8 710.1,735.2 709.2,734.7 708.3,734.2 707.5,733.7 706.6,733.2 705.7,732.7 704.8,732.2 703.9,731.7 702.9,731.2 702.0,730.8 701.1,730.3 700.1,729.8 699.2,729.4 698.2,728.9 697.3,728.5 696.3,728.1 695.3,727.6 694.3,727.2 693.3,726.8 692.3,726.4 691.3,726.0 690.3,725.6 689.3,725.2 688.3,724.8 687.3,724.4 686.2,724.0 685.2,723.7 684.1,723.3 683.1,722.9 682.0,722.6 681.0,722.3 679.9,721.9 678.8,721.6 677.7,721.3 676.6,721.0 675.5,720.7 674.4,720.4 673.3,720.1 672.2,719.8 671.1,719.5 670.0,719.3 668.9,719.0 667.7,718.7 666.6,718.5 665.4,718.3 664.3,718.0 663.1,717.8 662.0,717.6 660.8,717.4 659.7,717.2 658.5,717.0 657.3,716.8 656.2,716.6 655.0,716.5 653.8,716.3 652.6,716.2 651.4,716.0 650.2,715.9 649.0,715.8 647.8,715.7 646.6,715.5 645.4,715.4 644.2,715.4 643.0,715.3 641.7,715.2 640.5,715.1 639.3,715.1 638.1,715.0 636.8,715.0 635.6,715.0 634.4,714.9 633.1,714.9 631.9,714.9 630.6,714.9 629.4,714.9 628.2,714.9 626.9,715.0 625.7,715.0 624.4,715.1 623.2,715.1 621.9,715.2 620.6,715.2 619.4,715.3 618.1,715.4 616.9,715.5 615.6,715.6 614.3,715.7 613.1,715.9 611.8,716.0 610.6,716.2 609.3,716.3 608.0,716.5 606.8,716.6 605.5,716.8 604.3,717.0 603.0,717.2 601.7,717.4 600.5,717.7 599.2,717.9 597.9,718.1 596.7,718.4 595.4,718.6 594.2,718.9 592.9,719.2 591.7,719.4 590.4,719.7 589.2,720.0 587.9,720.3 586.7,720.7 585.4,721.0 584.2,721.3 582.9,721.7 581.7,722.0 580.4,722.4 579.2,722.8 578.0,723.2 576.7,723.6 575.5,724.0 574.3,724.4 573.1,724.8 571.8,725.2 570.6,725.7 569.4,726.1 568.2,726.6 567.0,727.0 565.8,727.5 564.6,728.0 563.4,728.5 562.2,729.0 561.0,729.5 559.8,730.0 558.6,730.6 557.5,731.1 556.3,731.7 555.1,732.2 554.0,732.8 552.8,733.4 551.7,734.0 550.5,734.6 549.4,735.2 548.2,735.8 547.1,736.4 546.0,737.0 544.9,737.7 543.7,738.3 542.6,739.0 541.5,739.6 540.4,740.3 539.3,741.0 538.3,741.7 537.2,742.4 536.1,743.1 535.1,743.8 534.0,744.5 532.9,745.3 531.9,746.0 530.9,746.7 529.8,747.5 528.8,748.3 527.8,749.0 526.8,749.8 525.8,750.6 524.8,751.4 523.8,752.2 522.8,753.0 521.9,753.9 520.9,754.7 520.0,755.5 519.0,756.4 518.1,757.2 517.2,758.1 516.2,759.0 515.3,759.8 514.4,760.7 513.5,761.6 512.7,762.5 511.8,763.4 510.9,764.3 510.1,765.3 509.2,766.2 508.4,767.1 507.6,768.1 506.8,769.0 505.9,770.0 505.1,770.9 504.4,771.9 503.6,772.9 502.8,773.9 502.1,774.8 501.3,775.8 500.6,776.9 499.9,777.9 499.2,778.9 498.4,779.9 497.8,780.9 497.1,782.0 496.4,783.0 495.8,784.1 495.1,785.1 494.5,786.2 493.8,787.2 493.2,788.3 492.6,789.4 492.0,790.5 491.5,791.5 490.9,792.6 490.3,793.7 489.8,794.8 489.3,796.0 488.7,797.1 488.2,798.2 487.7,799.3 487.3,800.4 486.8,801.6 486.3,802.7 485.9,803.9 485.5,805.0 485.0,806.2 484.6,807.3 484.2,808.5 483.9,809.6" fill="none" stroke="#000" stroke-width="3.1" stroke-linejoin="round"/>
<line x1="681.95" y1="752.92" x2="691.35" y2="725.95" stroke="#000" stroke-width="1.00"/>
<line x1="600.26" y1="767.11" x2="559.80" y2="730.03" stroke="#000" stroke-width="1.00"/>
<line x1="583.74" y1="781.39" x2="525.56" y2="750.76" stroke="#000" stroke-width="1.00"/>
<line x1="568.24" y1="815.31" x2="483.86" y2="809.64" stroke="#000" stroke-width="1.00"/>
<text transform="translate(660.00,672.80) scale(1.0486,1)" font-size="7.60" xml:space="preserve" stroke="#000" stroke-width="0.20">T [Nmm]</text>
<text transform="translate(660.00,681.50) scale(1.1474,1)" font-size="7.60" xml:space="preserve" stroke="#000" stroke-width="0.20">2000</text>
<text transform="translate(660.00,698.70) scale(1.1474,1)" font-size="7.60" xml:space="preserve" stroke="#000" stroke-width="0.20">1500</text>
<text transform="translate(660.00,715.50) scale(1.1474,1)" font-size="7.60" xml:space="preserve" stroke="#000" stroke-width="0.20">1000</text>
<text transform="translate(660.00,732.70) scale(1.1277,1)" font-size="7.60" xml:space="preserve" stroke="#000" stroke-width="0.20">500</text>
<text transform="translate(660.00,749.80) scale(1.0883,1)" font-size="7.60" xml:space="preserve" stroke="#000" stroke-width="0.20">0</text>
<text transform="translate(494.60,694.50) scale(1.1962,1)" font-size="8.50" xml:space="preserve" stroke="#000" stroke-width="0.15">Federkennlinie</text>
<text transform="translate(693.00,725.70) scale(0.9358,1)" font-size="7.60" xml:space="preserve" stroke="#000" stroke-width="0.20">T1</text>
<text transform="translate(526.00,751.00) scale(1.1454,1)" font-size="7.60" xml:space="preserve" stroke="#000" stroke-width="0.20">Tqn</text>
<text transform="translate(485.80,809.30) scale(1.0373,1)" font-size="7.60" xml:space="preserve" stroke="#000" stroke-width="0.20">Tn</text>
<text transform="translate(563.50,730.00) scale(0.8456,1)" font-size="7.60" xml:space="preserve" stroke="#000" stroke-width="0.20">T2</text>
<g fill="none" stroke="#000" stroke-width="8.00" stroke-linecap="round" stroke-linejoin="round">
<ellipse cx="288.6" cy="256.6" rx="41.4" ry="32.4"/>
<path d="M114.5,241.3 L232,252 Q241,253 247.6,261"/>
<path d="M288.6,289.0 H419.8"/>
</g>
<g fill="none" stroke="#fff" stroke-width="2.00" stroke-linecap="butt" stroke-linejoin="round">
<ellipse cx="288.6" cy="256.6" rx="41.4" ry="32.4"/>
<path d="M114.5,241.3 L232,252 Q241,253 247.6,261"/>
<path d="M288.6,289.0 H419.8"/>
</g>
<g fill="none" stroke="#000" stroke-width="1.00" stroke-linecap="butt" stroke-linejoin="round" stroke-dasharray="9 6 3 6" transform="translate(-0.3,-0.5)">
<ellipse cx="288.6" cy="256.6" rx="41.4" ry="32.4"/>
<path d="M114.5,241.3 L232,252 Q241,253 247.6,261"/>
<path d="M288.6,289.0 H419.8"/>
</g>
<line x1="235.0" y1="256.5" x2="340.0" y2="256.5" stroke="#000" stroke-width="1" stroke-dasharray="9 6 3 6"/>
<line x1="288.5" y1="217.0" x2="288.5" y2="298.0" stroke="#000" stroke-width="1" stroke-dasharray="9 6 3 6"/>
<line x1="109.00" y1="240.90" x2="113.00" y2="241.20" stroke="#000" stroke-width="1.00"/>
<line x1="422.00" y1="288.50" x2="426.00" y2="288.50" stroke="#000" stroke-width="1.00" shape-rendering="crispEdges"/>
<g fill="none" stroke="#000" stroke-width="6.40" stroke-linecap="round" stroke-linejoin="round">
<ellipse cx="957.9" cy="693.1" rx="29.8" ry="23.2"/>
<path d="M834,683.2 L914,689.4 Q924,690.5 928.4,697" stroke-width="5.60"/>
<path d="M957.9,716.7 H1052.5" stroke-width="5.70"/>
</g>
<g fill="none" stroke="#fff" stroke-width="0.90" stroke-linecap="butt" stroke-linejoin="round" stroke-dasharray="3 8">
<ellipse cx="957.9" cy="693.1" rx="29.8" ry="23.2"/>
</g>
<g fill="none" stroke="#fff" stroke-width="0.90" stroke-linecap="butt" stroke-linejoin="round" stroke-dasharray="8 2">
<path d="M834,683.2 L914,689.4 Q924,690.5 928.4,697"/>
</g>
<line x1="919.0" y1="693.5" x2="996.0" y2="693.5" stroke="#000" stroke-width="1" stroke-dasharray="9 6 3 6"/>
<line x1="958.5" y1="667.0" x2="958.5" y2="724.0" stroke="#000" stroke-width="1" stroke-dasharray="9 6 3 6"/>
<text transform="translate(933.75,792.50) scale(1.2075,1)" font-size="9.00" xml:space="preserve" stroke="#000" stroke-width="0.15">delta0=173.8°</text>
<g fill="none" stroke="#000" stroke-width="6.20" stroke-linecap="round" stroke-linejoin="round">
<ellipse cx="1209.6" cy="693.5" rx="29.2" ry="21.8"/>
<path d="M1192.2,600 L1204,665.5 L1201.5,671" stroke-width="5.60"/>
<path d="M1209.6,715.5 H1304.5" stroke-width="5.70"/>
</g>
<g fill="none" stroke="#fff" stroke-width="0.90" stroke-linecap="butt" stroke-linejoin="round" stroke-dasharray="3 8">
<ellipse cx="1209.6" cy="693.5" rx="29.2" ry="21.8"/>
</g>
<g fill="none" stroke="#fff" stroke-width="0.90" stroke-linecap="butt" stroke-linejoin="round" stroke-dasharray="8 2">
<path d="M1192.2,600 L1204,665.5 L1201.5,671"/>
</g>
<line x1="1173.0" y1="693.5" x2="1246.0" y2="693.5" stroke="#000" stroke-width="1" stroke-dasharray="9 6 3 6"/>
<line x1="1210.5" y1="665.0" x2="1210.5" y2="722.5" stroke="#000" stroke-width="1" stroke-dasharray="9 6 3 6"/>
<text transform="translate(1186.00,792.80) scale(1.2004,1)" font-size="9.00" xml:space="preserve" stroke="#000" stroke-width="0.15">delta1=98.78°</text>
<g fill="none" stroke="#000" stroke-width="6.20" stroke-linecap="round" stroke-linejoin="round">
<ellipse cx="1461.6" cy="693.4" rx="28.5" ry="21.3"/>
<path d="M1550,628.5 L1488,672.3 L1482,673.2" stroke-width="5.60"/>
<path d="M1461.6,714.9 H1556.5" stroke-width="5.70"/>
</g>
<g fill="none" stroke="#fff" stroke-width="0.90" stroke-linecap="butt" stroke-linejoin="round" stroke-dasharray="3 8">
<ellipse cx="1461.6" cy="693.4" rx="28.5" ry="21.3"/>
</g>
<g fill="none" stroke="#fff" stroke-width="0.90" stroke-linecap="butt" stroke-linejoin="round" stroke-dasharray="8 2">
<path d="M1550,628.5 L1488,672.3 L1482,673.2"/>
</g>
<line x1="1426.0" y1="693.5" x2="1494.0" y2="693.5" stroke="#000" stroke-width="1" stroke-dasharray="9 6 3 6"/>
<line x1="1461.5" y1="664.5" x2="1461.5" y2="721.5" stroke="#000" stroke-width="1" stroke-dasharray="9 6 3 6"/>
<text transform="translate(1437.90,792.80) scale(1.2111,1)" font-size="9.00" xml:space="preserve" stroke="#000" stroke-width="0.15">delta2=43.78°</text>
<line x1="909.00" y1="867.50" x2="1646.50" y2="867.50" stroke="#000" stroke-width="3.00" shape-rendering="crispEdges"/>
<line x1="910.50" y1="866.00" x2="910.50" y2="983.50" stroke="#000" stroke-width="3.00" shape-rendering="crispEdges"/>
<line x1="1124.00" y1="867.50" x2="1124.00" y2="983.50" stroke="#000" stroke-width="2.00" shape-rendering="crispEdges"/>
<line x1="1298.00" y1="867.50" x2="1298.00" y2="983.50" stroke="#000" stroke-width="2.00" shape-rendering="crispEdges"/>
<line x1="910.50" y1="970.00" x2="1646.50" y2="970.00" stroke="#000" stroke-width="2.00" shape-rendering="crispEdges"/>
<line x1="1124.00" y1="931.00" x2="1646.50" y2="931.00" stroke="#000" stroke-width="2.00" shape-rendering="crispEdges"/>
<line x1="910.50" y1="880.50" x2="1124.00" y2="880.50" stroke="#000" stroke-width="1.00" shape-rendering="crispEdges"/>
<line x1="910.50" y1="893.50" x2="1124.00" y2="893.50" stroke="#000" stroke-width="1.00" shape-rendering="crispEdges"/>
<line x1="910.50" y1="906.50" x2="1124.00" y2="906.50" stroke="#000" stroke-width="1.00" shape-rendering="crispEdges"/>
<line x1="910.50" y1="918.50" x2="1124.00" y2="918.50" stroke="#000" stroke-width="1.00" shape-rendering="crispEdges"/>
<line x1="910.50" y1="931.50" x2="1124.00" y2="931.50" stroke="#000" stroke-width="1.00" shape-rendering="crispEdges"/>
<line x1="910.50" y1="944.50" x2="1124.00" y2="944.50" stroke="#000" stroke-width="1.00" shape-rendering="crispEdges"/>
<line x1="910.50" y1="957.50" x2="1124.00" y2="957.50" stroke="#000" stroke-width="1.00" shape-rendering="crispEdges"/>
<line x1="1124.00" y1="880.50" x2="1298.00" y2="880.50" stroke="#000" stroke-width="1.00" shape-rendering="crispEdges"/>
<line x1="1124.00" y1="893.50" x2="1298.00" y2="893.50" stroke="#000" stroke-width="1.00" shape-rendering="crispEdges"/>
<line x1="1124.00" y1="906.50" x2="1298.00" y2="906.50" stroke="#000" stroke-width="1.00" shape-rendering="crispEdges"/>
<line x1="1124.00" y1="918.50" x2="1298.00" y2="918.50" stroke="#000" stroke-width="1.00" shape-rendering="crispEdges"/>
<line x1="940.50" y1="867.50" x2="940.50" y2="983.50" stroke="#000" stroke-width="1.00" shape-rendering="crispEdges"/>
<line x1="1043.50" y1="867.50" x2="1043.50" y2="983.50" stroke="#000" stroke-width="1.00" shape-rendering="crispEdges"/>
<line x1="1094.50" y1="867.50" x2="1094.50" y2="983.50" stroke="#000" stroke-width="1.00" shape-rendering="crispEdges"/>
<line x1="1165.50" y1="867.50" x2="1165.50" y2="931.00" stroke="#000" stroke-width="1.00" shape-rendering="crispEdges"/>
<line x1="1227.50" y1="867.50" x2="1227.50" y2="931.00" stroke="#000" stroke-width="1.00" shape-rendering="crispEdges"/>
<line x1="1595.50" y1="931.00" x2="1595.50" y2="970.00" stroke="#000" stroke-width="1.00" shape-rendering="crispEdges"/>
<line x1="1595.50" y1="957.50" x2="1646.50" y2="957.50" stroke="#000" stroke-width="1.00" shape-rendering="crispEdges"/>
<line x1="1472.50" y1="970.00" x2="1472.50" y2="983.50" stroke="#000" stroke-width="1.00" shape-rendering="crispEdges"/>
<text transform="translate(1169.80,876.90) scale(1.4044,1)" font-size="6.60" xml:space="preserve" stroke="#000" stroke-width="0.25">Datum</text>
<text transform="translate(1231.70,876.90) scale(1.4029,1)" font-size="6.60" xml:space="preserve" stroke="#000" stroke-width="0.25">Name</text>
<text transform="translate(1128.60,890.00) scale(1.3679,1)" font-size="6.60" xml:space="preserve" stroke="#000" stroke-width="0.25">Bearb.</text>
<text transform="translate(1128.60,902.80) scale(1.3938,1)" font-size="6.60" xml:space="preserve" stroke="#000" stroke-width="0.25">Gepr.</text>
<text transform="translate(1128.60,915.70) scale(1.3946,1)" font-size="6.60" xml:space="preserve" stroke="#000" stroke-width="0.25">Norm</text>
<text transform="translate(1169.00,890.00) scale(1.3925,1)" font-size="6.60" xml:space="preserve" stroke="#000" stroke-width="0.25">27.09.2010</text>
<text transform="translate(1169.00,902.80) scale(1.3925,1)" font-size="6.60" xml:space="preserve" stroke="#000" stroke-width="0.25">27.09.2010</text>
<text transform="translate(1169.00,915.70) scale(1.3925,1)" font-size="6.60" xml:space="preserve" stroke="#000" stroke-width="0.25">27.09.2010</text>
<text transform="translate(913.80,980.70) scale(1.2202,1)" font-size="6.60" xml:space="preserve" stroke="#000" stroke-width="0.25">Zust.</text>
<text transform="translate(944.00,980.70) scale(1.3310,1)" font-size="6.60" xml:space="preserve" stroke="#000" stroke-width="0.25">Änderung</text>
<text transform="translate(1047.60,980.70) scale(1.2500,1)" font-size="6.60" xml:space="preserve" stroke="#000" stroke-width="0.25">Datum</text>
<text transform="translate(1098.80,980.70) scale(1.1757,1)" font-size="6.60" xml:space="preserve" stroke="#000" stroke-width="0.25">Name</text>
<text transform="translate(1128.60,980.70) scale(1.2771,1)" font-size="6.60" xml:space="preserve" stroke="#000" stroke-width="0.25">BOSCH Diesel Systems</text>
<text transform="translate(1306.70,897.10) scale(1.3398,1)" font-size="21.20" xml:space="preserve" stroke="#000" stroke-width="0.15">Schenkelfeder</text>
<text transform="translate(1308.60,961.40) scale(1.3278,1)" font-size="21.20" xml:space="preserve" stroke="#000" stroke-width="0.15">123456789</text>
</svg>
</body></html>
